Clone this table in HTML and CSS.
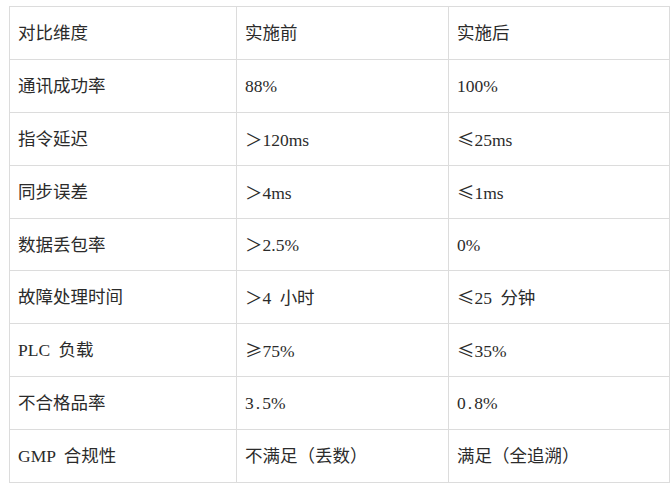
FILE: index.html
```html
<!DOCTYPE html>
<html lang="zh-CN">
<head>
<meta charset="utf-8">
<title>对比</title>
<link rel="stylesheet" href="styles.css">
</head>
<body>
<table class="cmp">
  <colgroup><col class="c1"><col class="c2"><col class="c3"></colgroup>
  <tbody>
    <tr><td>对比维度</td><td>实施前</td><td>实施后</td></tr>
    <tr><td>通讯成功率</td><td>88%</td><td>100%</td></tr>
    <tr><td>指令延迟</td><td><span class="sym">＞</span>120ms</td><td><span class="sym">≤</span>25ms</td></tr>
    <tr><td>同步误差</td><td><span class="sym">＞</span>4ms</td><td><span class="sym">≤</span>1ms</td></tr>
    <tr class="short"><td>数据丢包率</td><td><span class="sym">＞</span>2.5%</td><td>0%</td></tr>
    <tr><td>故障处理时间</td><td><span class="sym">＞</span>4 小时</td><td><span class="sym">≤</span>25 分钟</td></tr>
    <tr><td>PLC 负载</td><td><span class="sym">≥</span>75%</td><td><span class="sym">≤</span>35%</td></tr>
    <tr><td>不合格品率</td><td>3<span class="dot">.</span>5%</td><td>0<span class="dot">.</span>8%</td></tr>
    <tr><td>GMP 合规性</td><td>不满足（丢数）</td><td>满足（全追溯）</td></tr>
  </tbody>
</table>
</body>
</html>
```
FILE: styles.css
```css
html, body {
  margin: 0;
  background: #fff;
}
body {
  padding: 6px 0 0 9px;
  font-family: "Liberation Serif", "Noto Sans CJK SC", serif;
  font-size: 17.5px;
  color: #2b2b2b;
  word-spacing: 4px;
}
.cmp {
  border-collapse: collapse;
  width: 660px;
  table-layout: fixed;
}
.c1 { width: 227px; }
.c2 { width: 212px; }
.c3 { width: 221px; }
.cmp td {
  border: 1px solid #dcdcdc;
  padding: 0 8px;
  vertical-align: middle;
  line-height: 20px;
  font-weight: 400;
}
.cmp tr { height: 53px; }
.cmp tr.short { height: 52px; }
.sym {
  font-family: "Noto Sans CJK SC", sans-serif;
}
.dot {
  padding: 0 2px 0 2px;
}
```
